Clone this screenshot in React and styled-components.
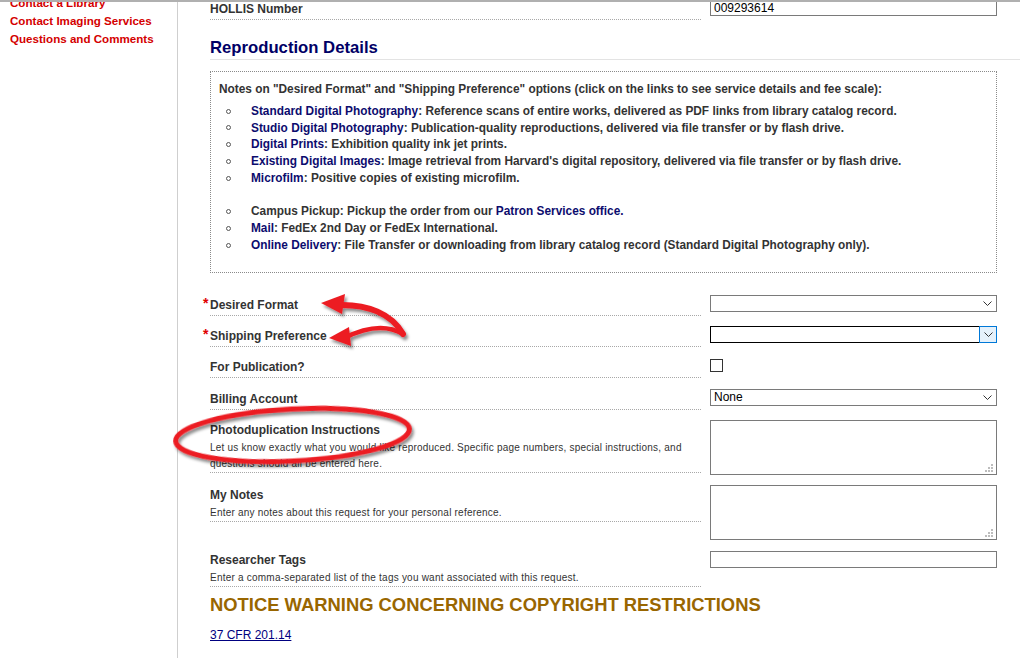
import React from "react";
import styled, { createGlobalStyle } from "styled-components";

const GlobalStyle = createGlobalStyle`
  html, body { margin: 0; padding: 0; background: #fff; }
  body { font-family: "Liberation Sans", Arial, Helvetica, sans-serif; color: #333; }
  * { box-sizing: border-box; }
`;

const Viewport = styled.div`
  position: relative;
  width: 1020px;
  height: 658px;
  overflow: hidden;
  border-top: 2px solid #b0b0b0;
`;

const Page = styled.div`
  display: flex;
  margin-top: -20px;
  min-height: 720px;
`;

const Sidebar = styled.nav`
  width: 178px;
  flex: none;
  border-right: 1px solid #cfcfcf;
  padding: 12px 0 0 10px;
`;

const SideLink = styled.a`
  display: block;
  color: #d40000;
  font-weight: bold;
  font-size: 11.6px;
  line-height: 18px;
  text-decoration: none;
  white-space: nowrap;
`;

const Main = styled.main`
  flex: 1;
  min-width: 0;
  padding: 17px 0 0 32px;
`;

const Row = styled.div`
  display: grid;
  grid-template-columns: 491px 287px;
  column-gap: 9px;
  align-items: start;
  margin-bottom: ${(p) => p.$gap ?? 10}px;
`;

const LabelCell = styled.div`
  border-bottom: 1px dotted #a8a8a8;
  padding: 3px 0 ${(p) => (p.$desc ? 0 : 3)}px;
`;

const Label = styled.div`
  font-weight: bold;
  font-size: 12px;
  line-height: 14px;
  color: #333;
  white-space: nowrap;
`;

const Req = styled.span`
  display: inline-block;
  width: 7px;
  margin-left: -7px;
  color: #e00000;
  font-size: 14px;
  line-height: 10px;
  vertical-align: top;
`;

const Desc = styled.div`
  margin-top: 3px;
  font-size: 10px;
  letter-spacing: 0.22px;
  line-height: 16px;
  color: #333;
`;

const SectionTitle = styled.h2`
  margin: 18px 0 0;
  padding-bottom: 1px;
  border-bottom: 1px solid #e3e3e3;
  font-size: 16.7px;
  line-height: 20px;
  font-weight: bold;
  color: #000066;
`;

const NotesBox = styled.div`
  margin: 11px 23px 0 0;
  border: 1px dotted #8a8a8a;
  padding: 9px 8px 18px;
  color: #333;
  font-weight: bold;
  font-size: 11.85px;
  line-height: 16.75px;
`;

const NotesIntro = styled.p`
  margin: 0;
`;

const BulletList = styled.ul`
  margin: ${(p) => p.$top}px 0 0;
  padding: 0;
  list-style: none;
`;

const Item = styled.li`
  display: grid;
  grid-template-columns: 32px 1fr;
  align-items: center;
`;

const Bullet = styled.span`
  display: block;
  width: 5px;
  height: 5px;
  margin-left: 7px;
  border: 1px solid #555;
  border-radius: 50%;
`;

const NavyLink = styled.a`
  color: #0c0c6e;
  text-decoration: none;
`;

const FormArea = styled.div`
  margin-top: 22px;
`;

const SelectBox = styled.div`
  display: flex;
  height: 17px;
  border: 1px solid ${(p) => (p.$focused ? "#000" : "#7a7a7a")};
  background: #fff;
  font-size: 12px;
  color: #000;
`;

const SelectValue = styled.div`
  flex: 1;
  padding-left: 3px;
  line-height: 15px;
`;

const SelectButton = styled.div`
  width: 17px;
  display: flex;
  align-items: center;
  justify-content: center;
  ${(p) =>
    p.$focused
      ? "margin: -1px -1px -1px 0; width: 18px; border: 1px solid #0078d7; background: #e5f1fb;"
      : ""}
`;

const Checkbox = styled.span`
  display: block;
  width: 13px;
  height: 13px;
  margin: 2px 0 7px;
  border: 1px solid #333;
  background: #fff;
`;

const TextBoxWrap = styled.div`
  position: relative;
`;

const TextArea = styled.textarea`
  display: block;
  width: 100%;
  height: 55px;
  margin: 0;
  border: 1px solid #7a7a7a;
  resize: none;
  font: 12px "Liberation Sans", Arial, sans-serif;
  outline: none;
`;

const Grip = styled.svg`
  position: absolute;
  right: 4px;
  bottom: 3px;
`;

const TextInput = styled.input`
  display: block;
  width: 100%;
  height: 17px;
  margin: ${(p) => p.$top ?? 0}px 0 0;
  padding: 0 3px;
  border: 1px solid #7a7a7a;
  font: 12px "Liberation Sans", Arial, sans-serif;
  color: #000;
  outline: none;
`;

const NoticeTitle = styled.h2`
  margin: 7px 0 0;
  font-size: 18.4px;
  line-height: 22px;
  font-weight: bold;
  color: #996600;
  white-space: nowrap;
`;

const CfrLink = styled.a`
  display: inline-block;
  margin-top: 12px;
  font-size: 12px;
  line-height: 14px;
  color: #000080;
  text-decoration: underline;
`;

const Annotations = styled.svg`
  position: absolute;
  left: 0;
  top: -2px;
  pointer-events: none;
`;

const Chevron = () => (
  <svg width="9" height="5" viewBox="0 0 9 5">
    <path d="M0.5 0.5 L4.5 4.5 L8.5 0.5" fill="none" stroke="#333" strokeWidth="1" />
  </svg>
);

const Select = ({ value, focused }) => (
  <SelectBox $focused={focused}>
    <SelectValue>{value}</SelectValue>
    <SelectButton $focused={focused}>
      <Chevron />
    </SelectButton>
  </SelectBox>
);

const ResizeGrip = () => (
  <Grip width="8" height="8" viewBox="0 0 8 8">
    <g fill="#bdbdbd">
      <rect x="6" y="0" width="2" height="2" />
      <rect x="3" y="3" width="2" height="2" />
      <rect x="6" y="3" width="2" height="2" />
      <rect x="0" y="6" width="2" height="2" />
      <rect x="3" y="6" width="2" height="2" />
      <rect x="6" y="6" width="2" height="2" />
    </g>
  </Grip>
);

const TextBox = () => (
  <TextBoxWrap>
    <TextArea />
    <ResizeGrip />
  </TextBoxWrap>
);

const formats = [
  ["Standard Digital Photography", "Reference scans of entire works, delivered as PDF links from library catalog record."],
  ["Studio Digital Photography", "Publication-quality reproductions, delivered via file transfer or by flash drive."],
  ["Digital Prints", "Exhibition quality ink jet prints."],
  ["Existing Digital Images", "Image retrieval from Harvard's digital repository, delivered via file transfer or by flash drive."],
  ["Microfilm", "Positive copies of existing microfilm."],
];

export default function App() {
  return (
    <>
      <GlobalStyle />
      <Viewport>
        <Page>
          <Sidebar>
            <SideLink href="#">Contact a Library</SideLink>
            <SideLink href="#">Contact Imaging Services</SideLink>
            <SideLink href="#">Questions and Comments</SideLink>
          </Sidebar>
          <Main>
            <Row $gap={0}>
              <LabelCell>
                <Label>HOLLIS Number</Label>
              </LabelCell>
              <TextInput defaultValue="009293614" />
            </Row>

            <SectionTitle>Reproduction Details</SectionTitle>

            <NotesBox>
              <NotesIntro>
                Notes on "Desired Format" and "Shipping Preference" options (click on the links to see service details and fee scale):
              </NotesIntro>
              <BulletList $top={5}>
                {formats.map(([name, text]) => (
                  <Item key={name}>
                    <Bullet />
                    <span>
                      <NavyLink href="#">{name}</NavyLink>: {text}
                    </span>
                  </Item>
                ))}
              </BulletList>
              <BulletList $top={16.75}>
                <Item>
                  <Bullet />
                  <span>
                    Campus Pickup: Pickup the order from our <NavyLink href="#">Patron Services office.</NavyLink>
                  </span>
                </Item>
                <Item>
                  <Bullet />
                  <span>
                    <NavyLink href="#">Mail</NavyLink>: FedEx 2nd Day or FedEx International.
                  </span>
                </Item>
                <Item>
                  <Bullet />
                  <span>
                    <NavyLink href="#">Online Delivery</NavyLink>: File Transfer or downloading from library catalog record (Standard Digital Photography only).
                  </span>
                </Item>
              </BulletList>
            </NotesBox>

            <FormArea>
              <Row>
                <LabelCell>
                  <Label>
                    <Req>*</Req>Desired Format
                  </Label>
                </LabelCell>
                <Select value="" />
              </Row>
              <Row>
                <LabelCell>
                  <Label>
                    <Req>*</Req>Shipping Preference
                  </Label>
                </LabelCell>
                <Select value="" focused />
              </Row>
              <Row>
                <LabelCell>
                  <Label>For Publication?</Label>
                </LabelCell>
                <Checkbox />
              </Row>
              <Row>
                <LabelCell>
                  <Label>Billing Account</Label>
                </LabelCell>
                <Select value="None" />
              </Row>
              <Row>
                <LabelCell $desc>
                  <Label>Photoduplication Instructions</Label>
                  <Desc>
                    Let us know exactly what you would like reproduced. Specific page numbers, special instructions, and questions should all be entered here.
                  </Desc>
                </LabelCell>
                <TextBox />
              </Row>
              <Row>
                <LabelCell $desc>
                  <Label>My Notes</Label>
                  <Desc>Enter any notes about this request for your personal reference.</Desc>
                </LabelCell>
                <TextBox />
              </Row>
              <Row $gap={0}>
                <LabelCell $desc>
                  <Label>Researcher Tags</Label>
                  <Desc>Enter a comma-separated list of the tags you want associated with this request.</Desc>
                </LabelCell>
                <TextInput $top={1} />
              </Row>
            </FormArea>

            <NoticeTitle>NOTICE WARNING CONCERNING COPYRIGHT RESTRICTIONS</NoticeTitle>
            <CfrLink href="#">37 CFR 201.14</CfrLink>
          </Main>
        </Page>

        <Annotations width="1020" height="660" viewBox="0 0 1020 660">
          <defs>
            <filter id="shadow" x="-10%" y="-30%" width="130%" height="180%">
              <feDropShadow dx="2" dy="3" stdDeviation="1.6" floodColor="#000" floodOpacity="0.45" />
            </filter>
          </defs>
          <g filter="url(#shadow)">
            <g fill="none" stroke="#ec1c24" strokeLinecap="round">
              <path d="M338 305 C 368 304, 392 314, 403 334" strokeWidth="6" />
              <path d="M403 334 C 388 325, 368 326, 344 338" strokeWidth="4.5" />
              <ellipse cx="292.5" cy="435" rx="117" ry="26" transform="rotate(-3 292.5 435)" strokeWidth="5" />
            </g>
            <g fill="#ec1c24">
              <polygon points="321,303 345,294 342,314" />
              <polygon points="329,338 349,327 351,346" />
            </g>
          </g>
        </Annotations>
      </Viewport>
    </>
  );
}
